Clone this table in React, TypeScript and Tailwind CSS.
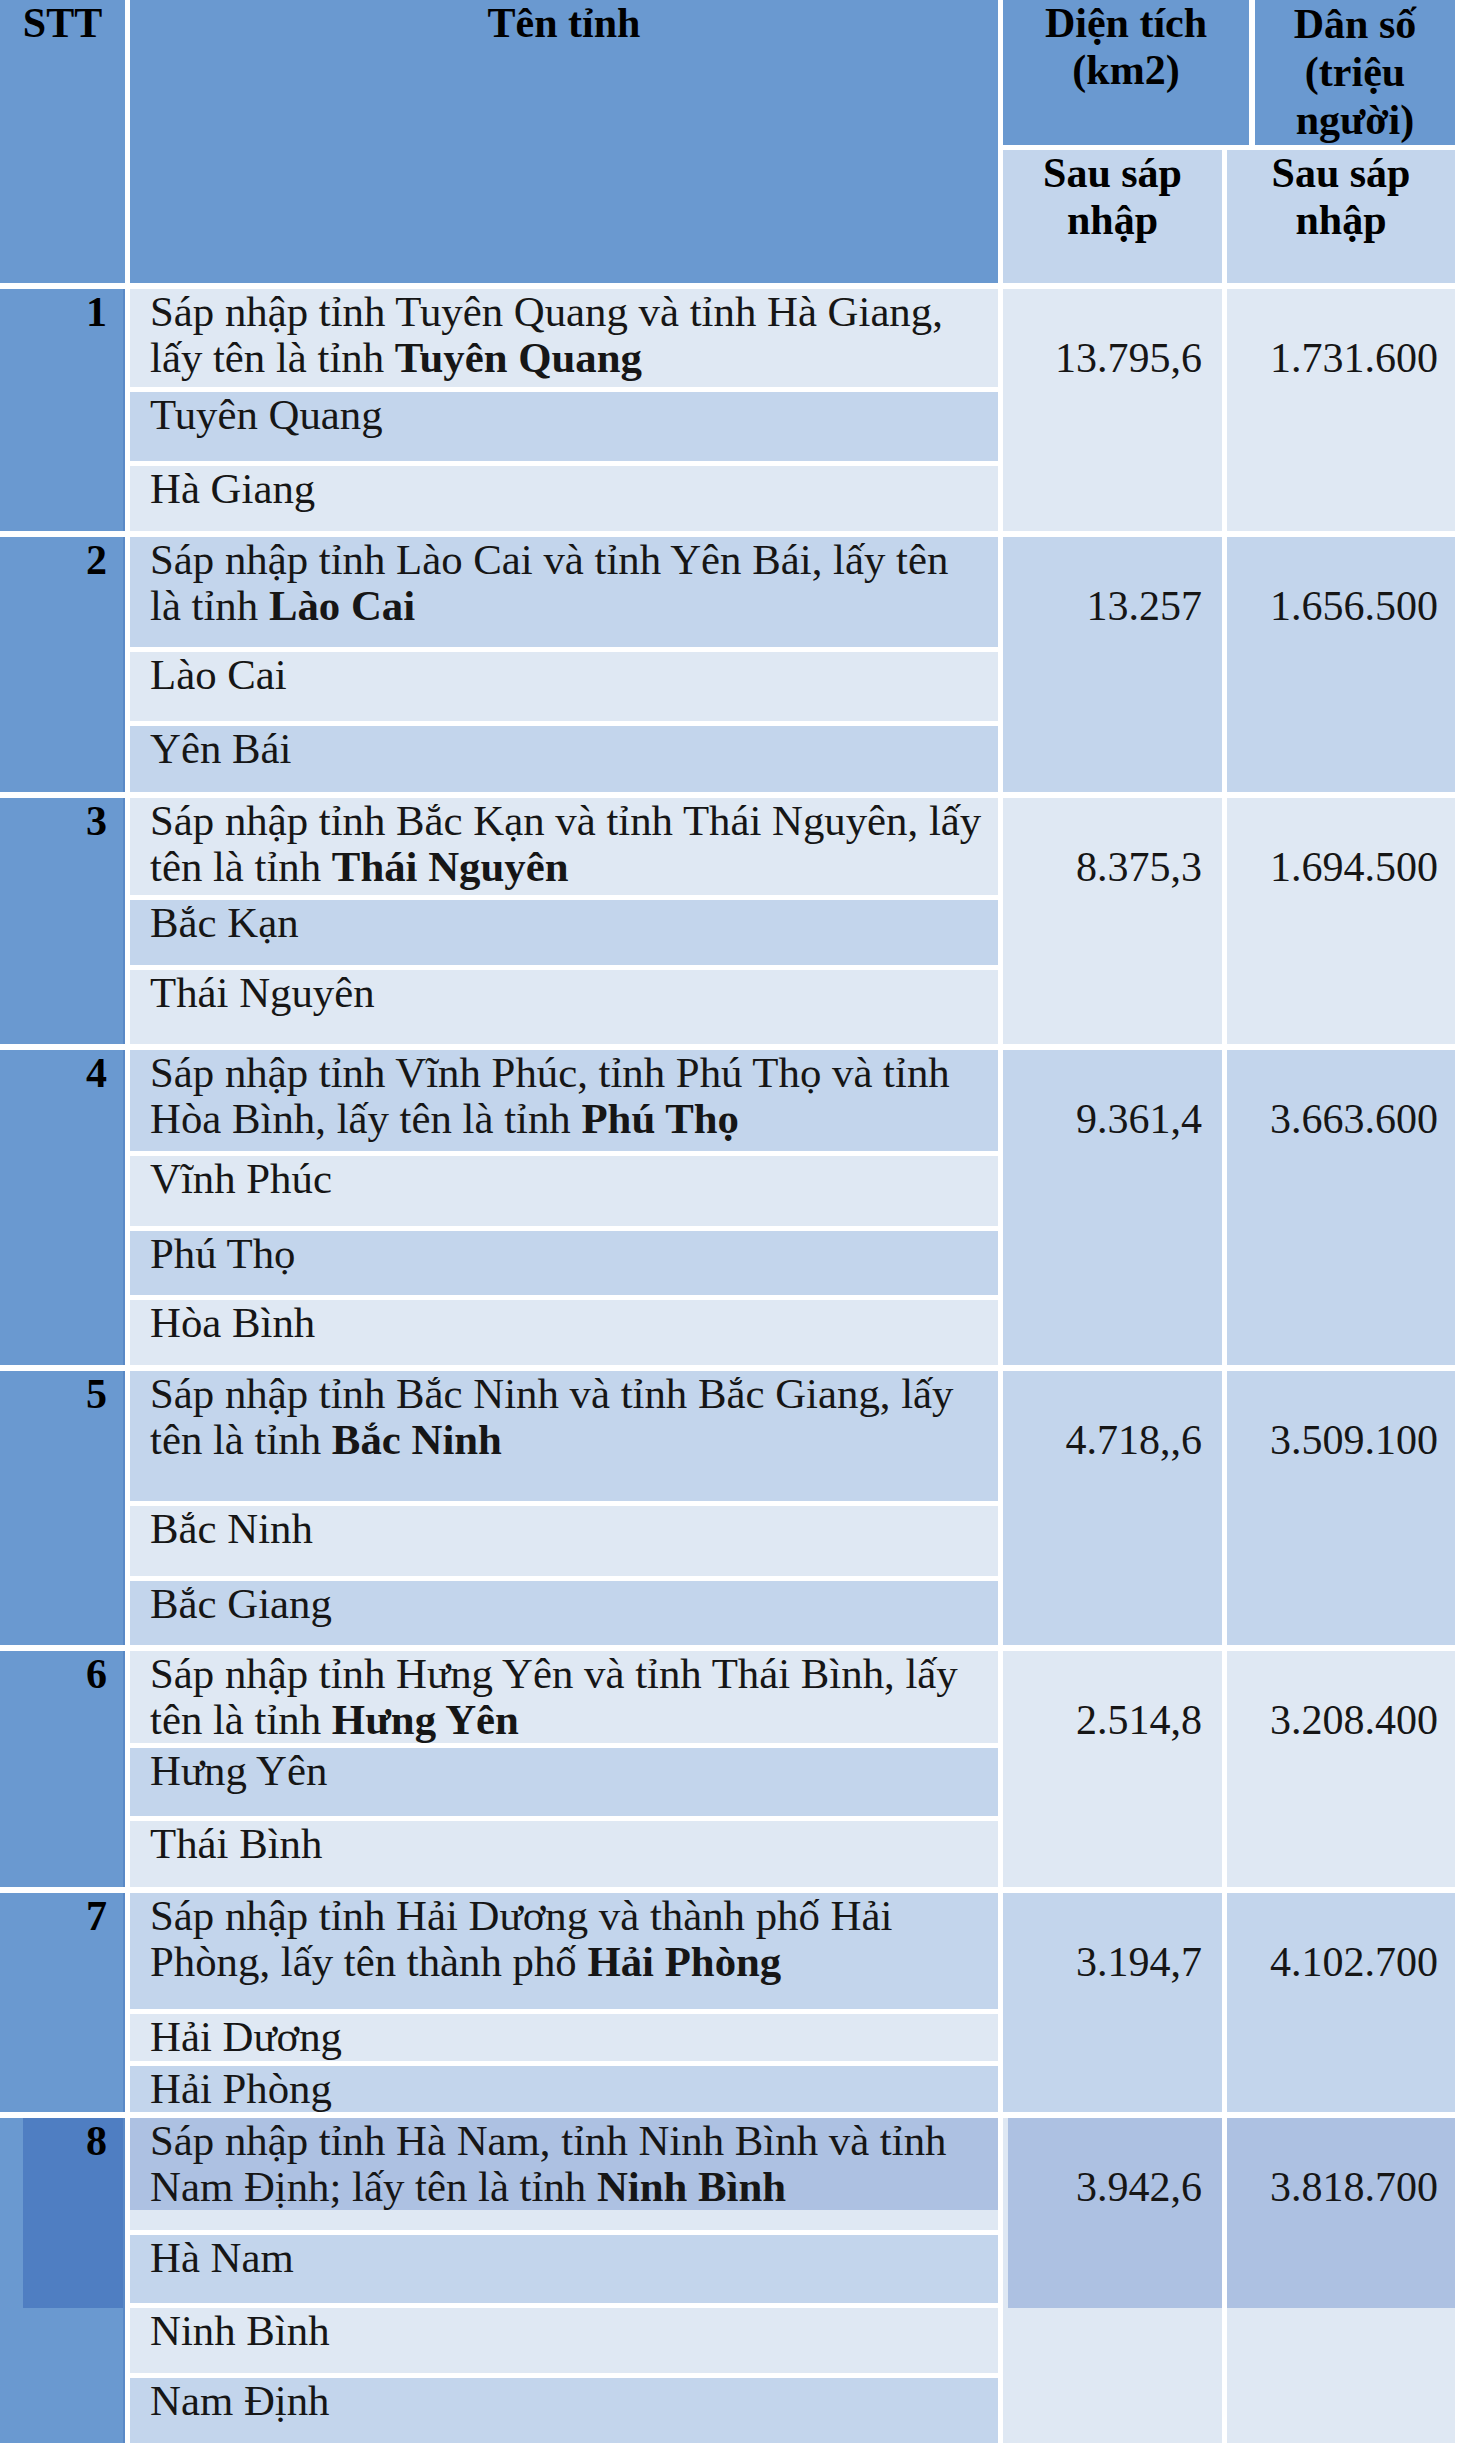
// Bảng sáp nhập tỉnh: diện tích và dân số sau sáp nhập
import React from 'react';

type Tone = 'light' | 'mid';

type MergeRowData = {
  stt: number;
  lead: string;
  name: string;
  area: string;
  pop: string;
  mainH: number;
  tone: Tone;
  highlight?: boolean;
  subs: { label: string; h: number }[];
};

const toneBg: Record<Tone, string> = {
  light: 'bg-[#dfe8f3]',
  mid: 'bg-[#c3d5ec]',
};

const flip = (t: Tone): Tone => (t === 'light' ? 'mid' : 'light');

const rows: MergeRowData[] = [
  {
    stt: 1,
    lead: 'Sáp nhập tỉnh Tuyên Quang và tỉnh Hà Giang, lấy tên là tỉnh ',
    name: 'Tuyên Quang',
    area: '13.795,6',
    pop: '1.731.600',
    mainH: 98,
    tone: 'light',
    subs: [
      { label: 'Tuyên Quang', h: 69 },
      { label: 'Hà Giang', h: 65 },
    ],
  },
  {
    stt: 2,
    lead: 'Sáp nhập tỉnh Lào Cai và tỉnh Yên Bái, lấy tên là tỉnh ',
    name: 'Lào Cai',
    area: '13.257',
    pop: '1.656.500',
    mainH: 110,
    tone: 'mid',
    subs: [
      { label: 'Lào Cai', h: 69 },
      { label: 'Yên Bái', h: 66 },
    ],
  },
  {
    stt: 3,
    lead: 'Sáp nhập tỉnh Bắc Kạn và tỉnh Thái Nguyên, lấy tên là tỉnh ',
    name: 'Thái Nguyên',
    area: '8.375,3',
    pop: '1.694.500',
    mainH: 97,
    tone: 'light',
    subs: [
      { label: 'Bắc Kạn', h: 65 },
      { label: 'Thái Nguyên', h: 74 },
    ],
  },
  {
    stt: 4,
    lead: 'Sáp nhập tỉnh Vĩnh Phúc, tỉnh Phú Thọ và tỉnh Hòa Bình, lấy tên là tỉnh ',
    name: 'Phú Thọ',
    area: '9.361,4',
    pop: '3.663.600',
    mainH: 101,
    tone: 'mid',
    subs: [
      { label: 'Vĩnh Phúc', h: 70 },
      { label: 'Phú Thọ', h: 64 },
      { label: 'Hòa Bình', h: 65 },
    ],
  },
  {
    stt: 5,
    lead: 'Sáp nhập tỉnh Bắc Ninh và tỉnh Bắc Giang, lấy tên là tỉnh ',
    name: 'Bắc Ninh',
    area: '4.718,,6',
    pop: '3.509.100',
    mainH: 130,
    tone: 'mid',
    subs: [
      { label: 'Bắc Ninh', h: 70 },
      { label: 'Bắc Giang', h: 64 },
    ],
  },
  {
    stt: 6,
    lead: 'Sáp nhập tỉnh Hưng Yên và tỉnh Thái Bình, lấy tên là tỉnh ',
    name: 'Hưng Yên',
    area: '2.514,8',
    pop: '3.208.400',
    mainH: 92,
    tone: 'light',
    subs: [
      { label: 'Hưng Yên', h: 68 },
      { label: 'Thái Bình', h: 66 },
    ],
  },
  {
    stt: 7,
    lead: 'Sáp nhập tỉnh Hải Dương và thành phố Hải Phòng, lấy tên thành phố ',
    name: 'Hải Phòng',
    area: '3.194,7',
    pop: '4.102.700',
    mainH: 116,
    tone: 'mid',
    subs: [
      { label: 'Hải Dương', h: 47 },
      { label: 'Hải Phòng', h: 46 },
    ],
  },
  {
    stt: 8,
    lead: 'Sáp nhập tỉnh Hà Nam, tỉnh Ninh Bình và tỉnh Nam Định; lấy tên là tỉnh ',
    name: 'Ninh Bình',
    area: '3.942,6',
    pop: '3.818.700',
    mainH: 112,
    tone: 'light',
    highlight: true,
    subs: [
      { label: 'Hà Nam', h: 68 },
      { label: 'Ninh Bình', h: 65 },
      { label: 'Nam Định', h: 65 },
    ],
  },
];

function Header() {
  return (
    <div className="flex h-[283px] gap-[5px] font-bold leading-[47px] text-black">
      <div className="w-[125px] bg-[#6a99d0] text-center">STT</div>
      <div className="w-[868px] bg-[#6a99d0] text-center">Tên tỉnh</div>
      <div className="flex w-[452px] flex-col gap-[5px]">
        <div className="flex h-[145px] gap-[6px]">
          <div className="w-[246px] bg-[#6a99d0] text-center">
            Diện tích
            <br />
            (km2)
          </div>
          <div className="w-[200px] bg-[#6a99d0] text-center leading-[48px]">
            Dân số
            <br />
            (triệu
            <br />
            người)
          </div>
        </div>
        <div className="flex flex-1 gap-[5px]">
          <div className="w-[219px] bg-[#c3d5ec] text-center">
            Sau sáp
            <br />
            nhập
          </div>
          <div className="w-[228px] bg-[#c3d5ec] text-center">
            Sau sáp
            <br />
            nhập
          </div>
        </div>
      </div>
    </div>
  );
}

function MergeRow({ row }: { row: MergeRowData }) {
  const hl = !!row.highlight;
  let subTone = row.tone;

  return (
    <div className="flex gap-[5px]">
      {/* STT */}
      <div className="w-[125px] border-r-2 border-[#5a89c6] bg-[#6a99d0]">
        {hl ? (
          <div className="ml-[23px] h-[190px] bg-[#4f7ec2] pr-[16px] text-right font-bold text-black">
            {row.stt}
          </div>
        ) : (
          <div className="pr-[16px] text-right font-bold text-black">{row.stt}</div>
        )}
      </div>

      {/* Tên tỉnh */}
      <div className="flex w-[868px] flex-col gap-[5px] text-[42.8px]">
        <div style={{ height: row.mainH }} className={toneBg[row.tone]}>
          {hl ? (
            <div className="h-[92px] bg-[#adc1e2] pl-[20px] pr-[13px]">
              {row.lead}
              <b>{row.name}</b>
            </div>
          ) : (
            <div className="pl-[20px] pr-[13px]">
              {row.lead}
              <b>{row.name}</b>
            </div>
          )}
        </div>
        {row.subs.map((s) => {
          subTone = flip(subTone);
          return (
            <div key={s.label} style={{ height: s.h }} className={`${toneBg[subTone]} pl-[20px]`}>
              {s.label}
            </div>
          );
        })}
      </div>

      {/* Diện tích */}
      <div className={`w-[219px] ${toneBg[row.tone]}`}>
        {hl ? (
          <div className="ml-[5px] h-[190px] bg-[#adc1e2] pr-[20px] pt-[46px] text-right">{row.area}</div>
        ) : (
          <div className="pr-[20px] pt-[46px] text-right">{row.area}</div>
        )}
      </div>

      {/* Dân số */}
      <div className={`w-[228px] ${toneBg[row.tone]}`}>
        {hl ? (
          <div className="h-[190px] bg-[#adc1e2] pr-[17px] pt-[46px] text-right">{row.pop}</div>
        ) : (
          <div className="pr-[17px] pt-[46px] text-right">{row.pop}</div>
        )}
      </div>
    </div>
  );
}

export default function App() {
  return (
    <div className="min-h-screen bg-white font-['Liberation_Serif','Times_New_Roman',serif] text-[42px] leading-[46px] text-[#161616]">
      <div className="flex w-[1455px] flex-col gap-[6px] pb-[6px]">
        <Header />
        {rows.map((r) => (
          <MergeRow key={r.stt} row={r} />
        ))}
      </div>
    </div>
  );
}
